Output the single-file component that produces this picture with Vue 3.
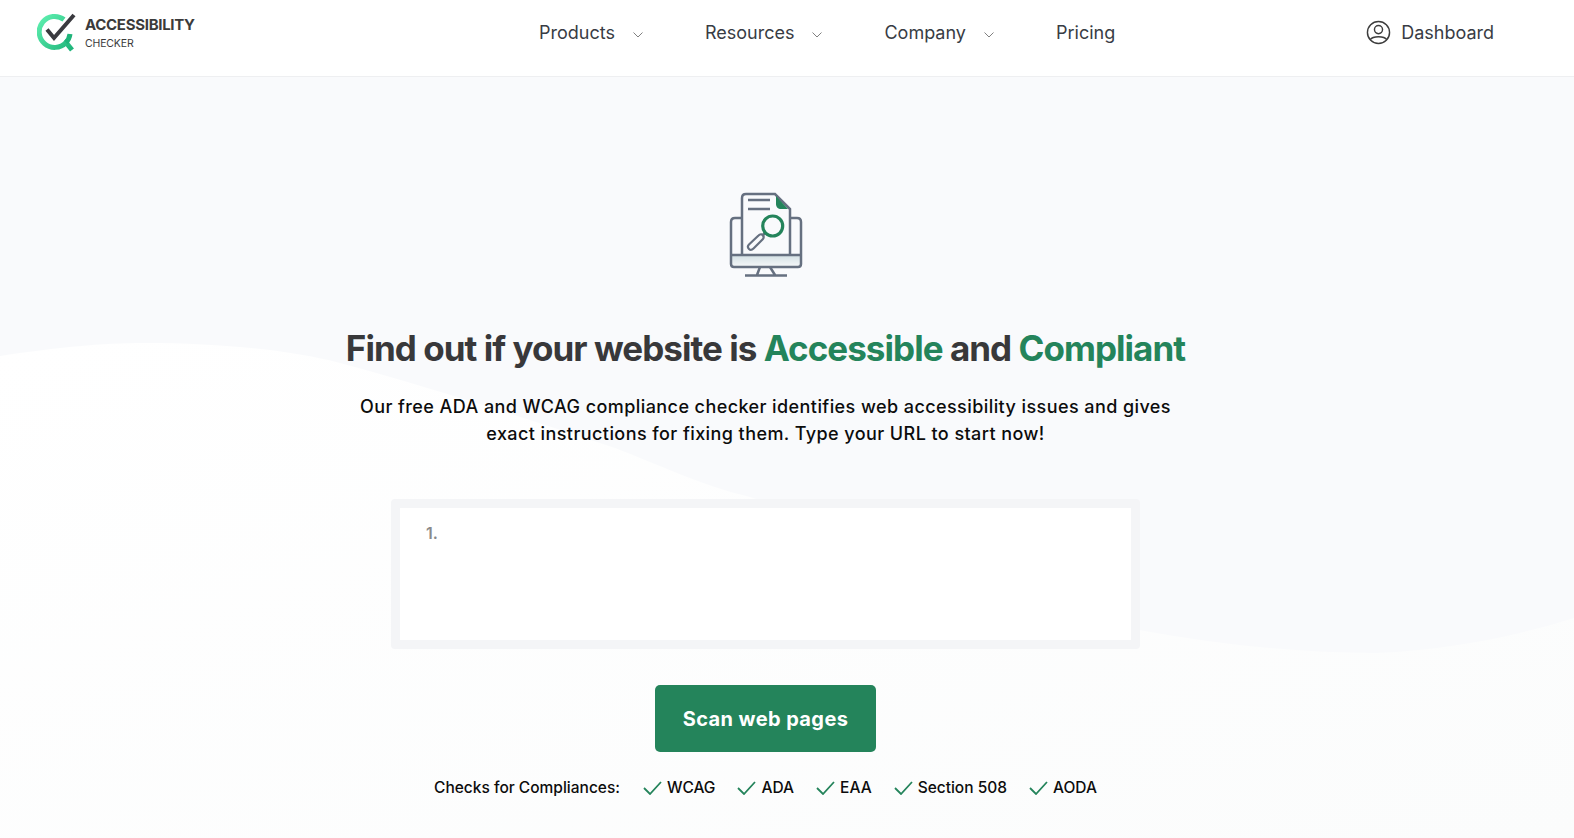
<template>
  <div class="page">
    <svg class="wave" viewBox="0 0 1574 838" preserveAspectRatio="none" aria-hidden="true">
      <defs>
        <linearGradient id="waveFill" x1="0" y1="0" x2="1" y2="1">
          <stop offset="0" stop-color="#ffffff" />
          <stop offset="1" stop-color="#fbfcfc" />
        </linearGradient>
      </defs>
      <path d="M0 356C60 347 100 343 145 343C220 343 290 350 340 363C440 390 530 420 615 448C660 465 700 485 750 497L1139 630C1220 645 1300 653 1376 653C1450 650 1520 635 1574 618V838H0Z" fill="url(#waveFill)" />
    </svg>

    <header class="topbar">
      <a class="logo">
        <svg width="42" height="40" viewBox="0 0 42 40">
          <defs>
            <linearGradient id="ring" x1="0" y1="0" x2="1" y2="1">
              <stop offset="0" stop-color="#5ff0b0" />
              <stop offset="1" stop-color="#1fb47a" />
            </linearGradient>
          </defs>
          <path d="M27 6.500A15.500 15.500 0 1 0 29 29.500L35 37" fill="none" stroke="url(#ring)" stroke-width="5" />
          <path d="M33 21A15.500 15.500 0 0 1 29 29.500" fill="none" stroke="#1fb47a" stroke-width="5" />
          <path d="M10 16.500L17 25L37 2" fill="none" stroke="#3a3a3f" stroke-width="4" />
        </svg>
        <span class="logo-text">
          <strong>ACCESSIBILITY</strong>
          <small>CHECKER</small>
        </span>
      </a>

      <nav class="nav">
        <a v-for="item in navItems" :key="item.label" class="nav-item">
          {{ item.label }}
          <svg v-if="item.menu" class="chev" width="10" height="6" viewBox="0 0 10 6">
            <path d="M.5.5L5 5L9.500.5" fill="none" stroke="#808080" />
          </svg>
        </a>
      </nav>

      <a class="dash">
        <svg width="25" height="25" viewBox="0 0 26 26" fill="none" stroke="#3d3d3d" stroke-width="1.500">
          <circle cx="13" cy="13" r="11.500" />
          <circle cx="13" cy="10" r="4.200" />
          <path d="M4.500 20.500C7 16.500 19 16.500 21.500 20.500" />
        </svg>
        Dashboard
      </a>
    </header>

    <main class="hero">
      <svg class="hero-icon" width="74" height="86" viewBox="0 0 74 86" fill="none">
        <defs>
          <linearGradient id="chin" x1="0" y1="0" x2="0" y2="1">
            <stop offset="0" stop-color="#d3e0e4" />
            <stop offset="1" stop-color="#f6f8f9" />
          </linearGradient>
        </defs>
        <path d="M2 63H72V72C72 74 71 75 69 75H5C3 75 2 74 2 72Z" fill="url(#chin)" />
        <path d="M13 26H6C3.500 26 2 27.500 2 30V72C2 74 3 75 5 75H69C71 75 72 74 72 72V30C72 27.500 70.500 26 68 26H61" stroke="#667080" stroke-width="2.500" />
        <path d="M2 63H72" stroke="#667080" stroke-width="2.500" />
        <path d="M13 63V6C13 3.500 14.500 2 17 2H46L61 17V63" stroke="#667080" stroke-width="2.500" />
        <path d="M47 4V12C47 15 49 17 52 17H59Z" fill="#24845b" />
        <path d="M19 8H41M19 17H41" stroke="#667080" stroke-width="2.500" />
        <path d="M33 44L36 41" stroke="#667080" stroke-width="2.500" />
        <path d="M20 57C18.500 55.500 18.500 54 20 52.500L29.500 43.500C31 42 33 42 34 43C35 44.500 35 46 33.500 47.500L24.500 56.500C23 58 21.500 58.500 20 57Z" stroke="#667080" stroke-width="2.200" />
        <circle cx="43.700" cy="34" r="10" stroke="#24845b" stroke-width="3.200" />
        <path d="M31 75L28 83M41 75L46 83M16 83.500H58" stroke="#667080" stroke-width="2.500" />
      </svg>

      <h1>Find out if your website is <em>Accessible</em> and <em>Compliant</em></h1>
      <p class="lead">Our free ADA and WCAG compliance checker identifies web accessibility issues and gives exact instructions for fixing them. Type your URL to start now!</p>

      <div class="editor-wrap">
        <div class="editor"><span class="line-no">1.</span></div>
      </div>

      <button class="scan" type="button">Scan web pages</button>

      <div class="checks">
        <span class="checks-title">Checks for Compliances:</span>
        <span v-for="c in compliances" :key="c" class="check">
          <svg width="19" height="14" viewBox="0 0 19 14"><path d="M1 7L7 13L18 1" fill="none" stroke="#24845b" stroke-width="1.800" /></svg>
          {{ c }}
        </span>
      </div>
    </main>
  </div>
</template>

<script setup>
const navItems = [
  { label: 'Products', menu: true },
  { label: 'Resources', menu: true },
  { label: 'Company', menu: true },
  { label: 'Pricing', menu: false },
]

const compliances = ['WCAG', 'ADA', 'EAA', 'Section 508', 'AODA']
</script>

<style>
html, body {
  margin: 0;
  background: #f9fafc;
}
</style>

<style scoped>
.page {
  position: relative;
  height: 838px;
  overflow: hidden;
  background: #f9fafc;
  font-family: Inter, "Liberation Sans", sans-serif;
  color: #333;
}

.wave {
  position: absolute;
  left: 0;
  top: 0;
  width: 100%;
  height: 100%;
}

.topbar {
  position: relative;
  height: 76px;
  display: flex;
  align-items: center;
  background: #fff;
  border-bottom: 1px solid #eeeff1;
  padding: 0 80px 0 37px;
}

.logo {
  display: flex;
  align-items: center;
  gap: 6px;
  width: 502px;
  margin-bottom: 10px;
}

.logo-text {
  display: flex;
  flex-direction: column;
  gap: 3px;
  color: #3b3b3b;
}

.logo-text strong {
  font-size: 15px;
  line-height: 18px;
  font-weight: 700;
  letter-spacing: -0.3px;
}

.logo-text small {
  font-size: 10.500px;
  line-height: 13px;
  letter-spacing: -0.15px;
}

.nav {
  display: flex;
  flex: 1;
  gap: 62px;
  margin-bottom: 11px;
}

.nav-item {
  display: flex;
  align-items: center;
  font-size: 18px;
  line-height: 24px;
  color: #383c44;
  white-space: nowrap;
}

.chev {
  margin: 4px 0 0 18px;
}

.dash {
  display: flex;
  align-items: center;
  gap: 10px;
  font-size: 18px;
  color: #383c44;
  margin-bottom: 11px;
}

.hero {
  position: relative;
  display: flex;
  flex-direction: column;
  align-items: center;
  padding: 115px 43px 0 0;
}

.hero-icon {
  display: block;
  margin-bottom: -2px;
}

h1 {
  margin: 49px 0 0;
  font-size: 35px;
  line-height: 46px;
  font-weight: 700;
  letter-spacing: -0.96px;
  color: #38383a;
}

h1 em {
  font-style: normal;
  color: #24845b;
}

.lead {
  width: 840px;
  margin: 22px 0 0;
  font-size: 18px;
  line-height: 27px;
  font-weight: 500;
  letter-spacing: 0.42px;
  text-align: center;
  color: #0c0c0c;
}

.editor-wrap {
  box-sizing: border-box;
  width: 749px;
  height: 150px;
  margin-top: 52px;
  padding: 9px;
  border-radius: 4px;
  background: #f4f5f7;
}

.editor {
  height: 100%;
  background: #fff;
  padding: 17px 26px;
  box-sizing: border-box;
}

.line-no {
  font-size: 16px;
  line-height: 17px;
  font-weight: 600;
  color: #8a8a8a;
  display: block;
}

.scan {
  width: 221px;
  height: 67px;
  margin-top: 36px;
  border: 0;
  border-radius: 5px;
  background: #24845b;
  color: #fff;
  font-family: Inter, sans-serif;
  font-size: 20px;
  font-weight: 700;
  letter-spacing: 0.4px;
}

.checks {
  display: flex;
  align-items: center;
  margin-top: 26px;
  font-size: 15.500px;
  font-weight: 500;
  color: #0c0c0c;
}

.checks-title {
  margin-right: 23px;
}

.check {
  display: flex;
  align-items: center;
  gap: 5px;
  margin-right: 22px;
}

.check:last-child {
  margin-right: 0;
}
</style>
